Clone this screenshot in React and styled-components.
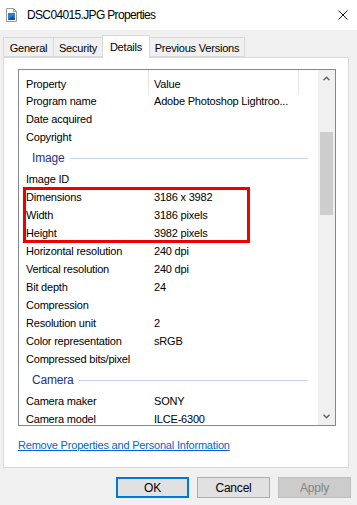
import React from 'react';
import styled, {createGlobalStyle} from "styled-components";

const GlobalStyle=createGlobalStyle`
  body{
    margin:0;
    background:#f0f0f0;
    font-family:"Liberation Sans", Arial, sans-serif;
    font-size:11px;
    letter-spacing:-0.2px;
    color:#000;
  }
`;

const rows=[
  {type:"row",name:"Program name",value:"Adobe Photoshop Lightroo..."},
  {type:"row",name:"Date acquired",value:""},
  {type:"row",name:"Copyright",value:""},
  {type:"group",name:"Image"},
  {type:"row",name:"Image ID",value:""},
  {type:"row",name:"Dimensions",value:"3186 x 3982"},
  {type:"row",name:"Width",value:"3186 pixels"},
  {type:"row",name:"Height",value:"3982 pixels"},
  {type:"row",name:"Horizontal resolution",value:"240 dpi"},
  {type:"row",name:"Vertical resolution",value:"240 dpi"},
  {type:"row",name:"Bit depth",value:"24"},
  {type:"row",name:"Compression",value:""},
  {type:"row",name:"Resolution unit",value:"2"},
  {type:"row",name:"Color representation",value:"sRGB"},
  {type:"row",name:"Compressed bits/pixel",value:""},
  {type:"group",name:"Camera"},
  {type:"row",name:"Camera maker",value:"SONY"},
  {type:"row",name:"Camera model",value:"ILCE-6300"},
];

const tabs=[
  {label:"General",w:51},
  {label:"Security",w:50},
  {label:"Details",w:48},
  {label:"Previous Versions",w:96},
];

const FileIcon=()=>(
  <svg width="11" height="14" viewBox="0 0 11 14">
    <path d="M0.5 0.5 H7.5 L10.5 3.5 V13.5 H0.5 Z" fill="#fff" stroke="#9a9a9a"/>
    <path d="M7.5 0.5 V3.5 H10.5" fill="none" stroke="#9a9a9a"/>
    <rect x="2" y="5" width="7" height="7" fill="#2f7fd6"/>
    <path d="M2 12 L6 8 L9 10 V12 Z" fill="#1b4f9c"/>
  </svg>
);

const CloseIcon=()=>(
  <svg width="10" height="10" viewBox="0 0 10 10">
    <path d="M0.5 0.5 L9.5 9.5 M9.5 0.5 L0.5 9.5" stroke="#111" strokeWidth="1"/>
  </svg>
);

const Chevron=({down})=>(
  <svg width="7" height="5" viewBox="0 0 7 5">
    <path d={down?"M0.5 0.8 L3.5 3.8 L6.5 0.8":"M0.5 4.2 L3.5 1.2 L6.5 4.2"} fill="none" stroke="#606060" strokeWidth="1.4"/>
  </svg>
);

export default function App(){
  return(
    <>
      <GlobalStyle/>
      <Window>
        <TitleBar>
          <FileIcon/>
          <Title>DSC04015.JPG Properties</Title>
          <Close><CloseIcon/></Close>
        </TitleBar>
        <Body>
          <TabStrip>
            {tabs.map(t=>(
              <Tab key={t.label} w={t.w} active={t.label==="Details"}>{t.label}</Tab>
            ))}
          </TabStrip>
          <Panel>
            <ListView>
              <ListContent>
                <HeaderRow>
                  <HeadCell>Property</HeadCell>
                  <HeadCell>Value</HeadCell>
                </HeaderRow>
                {rows.map((r,i)=>r.type==="group"?(
                  <GroupRow key={i}>
                    <GroupName>{r.name}</GroupName>
                    <GroupLine/>
                  </GroupRow>
                ):(
                  <Row key={i}>
                    <NameCell>{r.name}</NameCell>
                    <ValueCell>{r.value}</ValueCell>
                  </Row>
                ))}
                <Highlight/>
              </ListContent>
              <ScrollBar>
                <ArrowBox><Chevron/></ArrowBox>
                <Track>
                  <Thumb/>
                </Track>
                <ArrowBox><Chevron down/></ArrowBox>
              </ScrollBar>
            </ListView>
            <RemoveLink>Remove Properties and Personal Information</RemoveLink>
          </Panel>
          <ButtonRow>
            <Button primary>OK</Button>
            <Button>Cancel</Button>
            <Button disabled>Apply</Button>
          </ButtonRow>
        </Body>
      </Window>
    </>
  )
}

const Window=styled.div`
  width:357px;
  height:505px;
  display:flex;
  flex-direction:column;
  overflow:hidden;
`;

const TitleBar=styled.div`
  height:30px;
  background:#fff;
  display:flex;
  align-items:center;
  padding-left:6px;
  flex-shrink:0;
`;

const Title=styled.div`
  margin-left:10px;
  font-size:12px;
  letter-spacing:-0.65px;
  flex:1;
`;

const Close=styled.div`
  width:20px;
  display:flex;
  justify-content:center;
  margin-right:4px;
`;

const Body=styled.div`
  flex:1;
  display:flex;
  flex-direction:column;
  padding:5px 8px 0 3px;
`;

const TabStrip=styled.div`
  display:flex;
  align-items:flex-end;
  height:22px;
  position:relative;
  z-index:1;
`;

const Tab=styled.div`
  width:${p=>p.w}px;
  height:${p=>p.active?"23px":"20px"};
  margin-bottom:${p=>p.active?"-1px":"0"};
  margin-left:-1px;
  padding-top:${p=>p.active?"0":"1px"};
  background:${p=>p.active?"#fff":"#f0f0f0"};
  border:1px solid #d9d9d9;
  border-bottom:${p=>p.active?"none":"1px solid #d9d9d9"};
  display:flex;
  align-items:center;
  justify-content:center;
  box-sizing:border-box;
  &:first-child{margin-left:0;}
`;

const Panel=styled.div`
  background:#fff;
  border:1px solid #d9d9d9;
  height:411px;
  box-sizing:border-box;
  padding:11px 12px 0 14px;
  display:flex;
  flex-direction:column;
`;

const ListView=styled.div`
  border:1px solid #828790;
  height:357px;
  box-sizing:border-box;
  display:flex;
  overflow:hidden;
`;

const ListContent=styled.div`
  flex:1;
  position:relative;
  overflow:hidden;
`;

const HeaderRow=styled.div`
  display:flex;
  height:22px;
`;

const HeadCell=styled.div`
  display:flex;
  align-items:center;
  padding:3px 0 0 7px;
  width:122px;
  height:100%;
  box-sizing:content-box;
  border-right:1px solid #e5e5e5;
  &:last-child{width:144px;padding-left:5px;}
`;

const Row=styled.div`
  display:flex;
  height:18px;
  align-items:center;
`;

const NameCell=styled.div`
  width:129px;
  padding-left:7px;
  box-sizing:border-box;
  white-space:nowrap;
`;

const ValueCell=styled.div`
  padding-left:6px;
  white-space:nowrap;
`;

const GroupRow=styled.div`
  display:flex;
  align-items:center;
  height:24px;
  padding-left:13px;
  padding-right:10px;
`;

const GroupName=styled.div`
  color:#1e3287;
  font-size:12px;
  margin-right:6px;
`;

const GroupLine=styled.div`
  flex:1;
  height:1px;
  background:#c5d3ee;
`;

const Highlight=styled.div`
  position:absolute;
  left:4px;
  top:117px;
  width:227px;
  height:56px;
  border:3px solid #ee0000;
  box-sizing:border-box;
`;

const ScrollBar=styled.div`
  width:17px;
  background:#f0f0f0;
  display:flex;
  flex-direction:column;
`;

const ArrowBox=styled.div`
  height:17px;
  display:flex;
  align-items:center;
  justify-content:center;
`;

const Track=styled.div`
  flex:1;
  padding:45px 2px 0 2px;
`;

const Thumb=styled.div`
  height:83px;
  background:#cdcdcd;
`;

const RemoveLink=styled.div`
  margin-top:13px;
  color:#0066cc;
  text-decoration:underline;
`;

const ButtonRow=styled.div`
  display:flex;
  justify-content:flex-end;
  gap:8px;
  margin-top:9px;
  margin-right:-2px;
`;

const Button=styled.div`
  width:73px;
  height:21px;
  box-sizing:border-box;
  display:flex;
  align-items:center;
  justify-content:center;
  font-size:12px;
  background:${p=>p.disabled?"#cccccc":"#e1e1e1"};
  color:${p=>p.disabled?"#838383":"#000"};
  border:${p=>p.primary?"2px solid #0078d7":p.disabled?"1px solid #bfbfbf":"1px solid #adadad"};
`;
